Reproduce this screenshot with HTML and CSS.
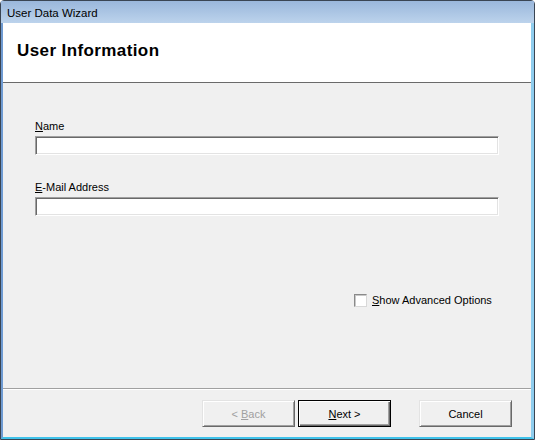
FILE: index.html
```html
<!DOCTYPE html>
<html lang="en">

<head>
    <meta charset="UTF-8">
    <title>User Data Wizard</title>
    <link rel="stylesheet" href="styles.css">
</head>

<body>
    <div class="window">
        <div class="titlebar">User Data Wizard</div>
        <div class="client">
            <div class="header">
                <h1>User Information</h1>
            </div>

            <div class="content">
                <label class="field-label" for="name"><u>N</u>ame</label>
                <input class="textbox" type="text" id="name">

                <label class="field-label second" for="email"><u>E</u>-Mail Address</label>
                <input class="textbox" type="text" id="email">

                <div class="check-row">
                    <span class="checkbox"></span>
                    <span class="check-label"><u>S</u>how Advanced Options</span>
                </div>
            </div>

            <div class="separator"></div>

            <div class="footer">
                <button class="btn disabled">&lt; <u>B</u>ack</button>
                <button class="btn default"><u>N</u>ext &gt;</button>
                <button class="btn cancel">Cancel</button>
            </div>
        </div>
    </div>
</body>

</html>
```

FILE: styles.css
```css
body {
    margin: 0;
    padding: 0;
    font-family: 'Liberation Sans', Arial, sans-serif;
    font-size: 11px;
    color: #000;
}

.window {
    width: 535px;
    height: 440px;
    box-sizing: border-box;
    border: 1px solid #3a4553;
    border-radius: 4px 4px 0 0;
    background-color: #a9c6e6;
    display: flex;
    flex-direction: column;
}

.titlebar {
    height: 22px;
    box-sizing: border-box;
    padding: 2px 0 0 6px;
    line-height: 20px;
    font-size: 11.5px;
    background: linear-gradient(#9ab7db, #bcd3ec);
}

.client {
    flex: 1;
    display: flex;
    flex-direction: column;
    background-color: #f0f0f0;
    border-left: 2px solid #6f9bd2;
    border-right: 3px solid #8fcdee;
    border-bottom: 2px solid #3fc2ea;
}

.header {
    height: 60px;
    box-sizing: border-box;
    padding: 18px 0 0 14px;
    background-color: #fff;
    border-bottom: 1px solid #6a6a6a;
}

h1 {
    margin: 0;
    font-size: 17px;
    line-height: 20px;
    letter-spacing: 0.4px;
    font-weight: bold;
}

.content {
    flex: 1;
    padding: 35px 0 0 32px;
    display: flex;
    flex-direction: column;
    align-items: flex-start;
}

.field-label {
    display: block;
    line-height: 17px;
    margin-bottom: 1px;
}

.field-label.second {
    margin-top: 24px;
}

.textbox {
    width: 464px;
    height: 19px;
    margin: 0;
    padding: 0;
    box-sizing: border-box;
    background-color: #fff;
    border: 1px solid;
    border-color: #a0a0a0 #fff #fff #a0a0a0;
    box-shadow: inset 1px 1px #696969, inset -1px -1px #e3e3e3;
    outline: none;
}

.check-row {
    display: flex;
    align-items: center;
    margin: 78px 0 0 319px;
}

.checkbox {
    width: 13px;
    height: 13px;
    box-sizing: border-box;
    background-color: #fff;
    border: 1px solid;
    border-color: #8a8a8a #d8d8d8 #d8d8d8 #8a8a8a;
    box-shadow: inset 1px 1px #c8c8c8;
}

.check-label {
    margin-left: 5px;
    line-height: 13px;
}

.separator {
    height: 1px;
    background-color: #a0a0a0;
    border-bottom: 1px solid #fff;
}

.footer {
    height: 47px;
    box-sizing: border-box;
    display: flex;
    justify-content: flex-end;
    align-items: flex-start;
    padding: 10px 19px 0 0;
}

.btn {
    width: 93px;
    height: 27px;
    margin: 0;
    padding: 0;
    font-family: 'Liberation Sans', Arial, sans-serif;
    font-size: 11px;
    color: #000;
    background-color: #f0f0f0;
    border: 1px solid;
    border-color: #e3e3e3 #696969 #696969 #e3e3e3;
    box-shadow: inset 1px 1px #fff, inset -1px -1px #a0a0a0;
}

.btn.disabled {
    color: #a0a0a0;
}

.btn.default {
    margin-left: 3px;
    border-color: #000;
    box-shadow: inset 1px 1px #fff, inset -1px -1px #696969, inset -2px -2px #a0a0a0;
}

.btn.cancel {
    margin-left: 28px;
}
```
